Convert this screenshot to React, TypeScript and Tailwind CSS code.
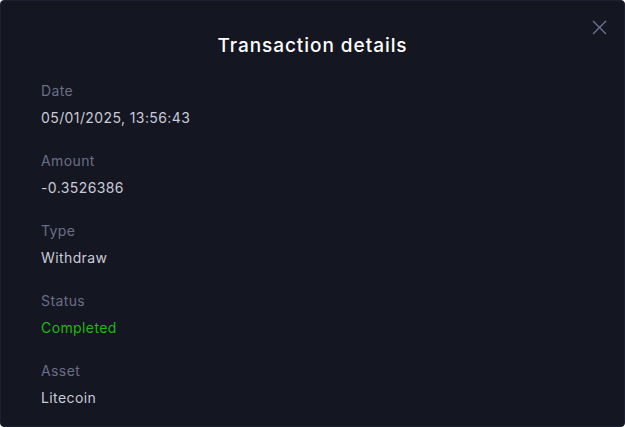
import React from 'react';

const rows: { label: string; value: string; tone?: 'success' }[] = [
  { label: 'Date', value: '05/01/2025, 13:56:43' },
  { label: 'Amount', value: '-0.3526386' },
  { label: 'Type', value: 'Withdraw' },
  { label: 'Status', value: 'Completed', tone: 'success' },
  { label: 'Asset', value: 'Litecoin' },
];

export default function App() {
  return (
    <div
      className="relative w-[625px] h-[427px] overflow-hidden bg-[#141622] border border-[#1d2030] rounded-sm"
      style={{ fontFamily: 'Inter, "Open Sans", sans-serif' }}
    >
      {/* Close */}
      <button className="absolute top-[19px] right-[17px] text-[#737690]">
        <svg width="15" height="15" viewBox="0 0 15 15" fill="none" stroke="currentColor" strokeWidth="1.3">
          <path d="M1 1L14 14M14 1L1 14" />
        </svg>
      </button>

      <h2 className="pt-[31px] text-center text-[19px] leading-7 font-medium tracking-[0.05em] text-white">
        Transaction details
      </h2>

      <div className="mt-[21px] px-[40px] flex flex-col gap-[23px] tracking-[0.025em]">
        {rows.map((row) => (
          <div key={row.label} className="flex flex-col gap-[7px]">
            <span className="text-sm leading-5 text-[#6b6e86]">{row.label}</span>
            <span
              className={
                row.tone === 'success'
                  ? 'text-sm leading-5 text-[#21b80f]'
                  : 'text-sm leading-5 text-[#c9cbd6]'
              }
            >
              {row.value}
            </span>
          </div>
        ))}
      </div>
    </div>
  );
}
